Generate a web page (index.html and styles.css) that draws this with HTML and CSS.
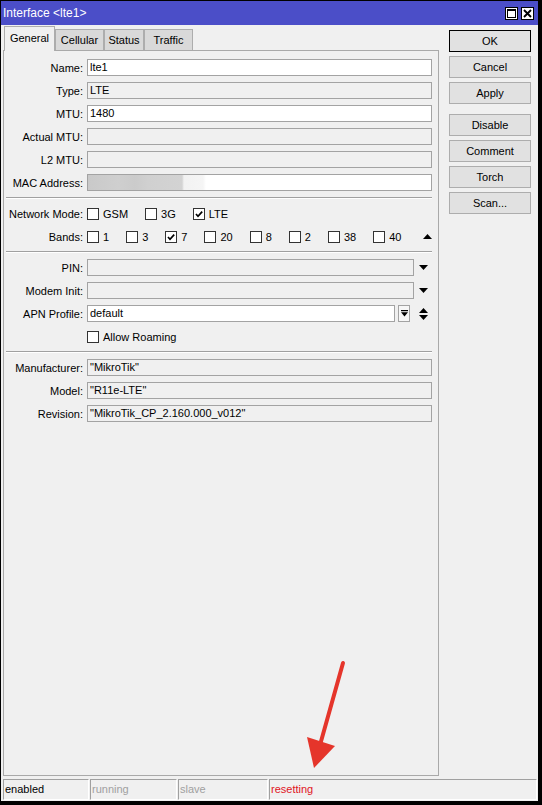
FILE: index.html
```html
<!DOCTYPE html>
<html>
<head>
<meta charset="utf-8">
<title>Interface &lt;lte1&gt;</title>
<link rel="stylesheet" href="styles.css">
</head>
<body>
<div class="window">
  <div class="titlebar">
    <span class="title">Interface &lt;lte1&gt;</span>
    <div class="tb-buttons">
      <span class="tb-btn"><svg width="9" height="9" viewBox="0 0 9 9"><rect x="0.5" y="0.5" width="8" height="8" fill="none" stroke="#000"/><rect x="0" y="0" width="9" height="2" fill="#000"/></svg></span>
      <span class="tb-btn"><svg width="9" height="9" viewBox="0 0 9 9"><path d="M1 1 L8 8 M8 1 L1 8" stroke="#000" stroke-width="1.9"/></svg></span>
    </div>
  </div>
  <div class="main">
    <div class="left">
      <div class="tabs">
        <div class="tab active t-general">General</div>
        <div class="tab t-cellular">Cellular</div>
        <div class="tab t-status">Status</div>
        <div class="tab t-traffic">Traffic</div>
      </div>
      <div class="panel">
        <div class="row"><span class="lbl">Name:</span><div class="field edit">lte1</div></div>
        <div class="row"><span class="lbl">Type:</span><div class="field">LTE</div></div>
        <div class="row"><span class="lbl">MTU:</span><div class="field edit">1480</div></div>
        <div class="row"><span class="lbl">Actual MTU:</span><div class="field"></div></div>
        <div class="row"><span class="lbl">L2 MTU:</span><div class="field"></div></div>
        <div class="row"><span class="lbl">MAC Address:</span><div class="field edit mac"></div></div>
        <div class="sep"></div>
        <div class="row"><span class="lbl">Network Mode:</span>
          <div class="checks">
            <label class="chk"><span class="cb"></span>GSM</label>
            <label class="chk"><span class="cb"></span>3G</label>
            <label class="chk"><span class="cb"><svg width="10" height="10" viewBox="0 0 10 10"><path d="M2 5 L4 7.2 L8.2 2.6" fill="none" stroke="#000" stroke-width="1.7"/></svg></span>LTE</label>
          </div>
        </div>
        <div class="row"><span class="lbl">Bands:</span>
          <div class="checks">
            <label class="chk"><span class="cb"></span>1</label>
            <label class="chk"><span class="cb"></span>3</label>
            <label class="chk"><span class="cb"><svg width="10" height="10" viewBox="0 0 10 10"><path d="M2 5 L4 7.2 L8.2 2.6" fill="none" stroke="#000" stroke-width="1.7"/></svg></span>7</label>
            <label class="chk"><span class="cb"></span>20</label>
            <label class="chk"><span class="cb"></span>8</label>
            <label class="chk"><span class="cb"></span>2</label>
            <label class="chk"><span class="cb"></span>38</label>
            <label class="chk"><span class="cb"></span>40</label>
            <span class="slot push"><svg width="9" height="5" viewBox="0 0 9 5"><polygon points="0,5 9,5 4.5,0" fill="#000"/></svg></span>
          </div>
        </div>
        <div class="sep"></div>
        <div class="row"><span class="lbl">PIN:</span>
          <div class="val"><div class="field grow"></div><span class="slot"><svg width="9" height="5" viewBox="0 0 9 5"><polygon points="0,0 9,0 4.5,5" fill="#000"/></svg></span></div>
        </div>
        <div class="row"><span class="lbl">Modem Init:</span>
          <div class="val"><div class="field grow"></div><span class="slot"><svg width="9" height="5" viewBox="0 0 9 5"><polygon points="0,0 9,0 4.5,5" fill="#000"/></svg></span></div>
        </div>
        <div class="row"><span class="lbl">APN Profile:</span>
          <div class="val"><div class="field edit grow">default</div><span class="dd"><svg width="7" height="7" viewBox="0 0 7 7"><rect x="0" y="0" width="7" height="1.2" fill="#000"/><polygon points="0,2.3 7,2.3 3.5,6.5" fill="#000"/></svg></span><span class="slot gap4"><svg width="9" height="12" viewBox="0 0 9 12"><polygon points="0,5 9,5 4.5,0" fill="#000"/><polygon points="0,7 9,7 4.5,12" fill="#000"/></svg></span></div>
        </div>
        <div class="row"><span class="lbl"></span>
          <div class="checks"><label class="chk"><span class="cb"></span>Allow Roaming</label></div>
        </div>
        <div class="sep"></div>
        <div class="row"><span class="lbl">Manufacturer:</span><div class="field">"MikroTik"</div></div>
        <div class="row"><span class="lbl">Model:</span><div class="field">"R11e-LTE"</div></div>
        <div class="row"><span class="lbl">Revision:</span><div class="field">"MikroTik_CP_2.160.000_v012"</div></div>
      </div>
    </div>
    <div class="buttons">
      <div class="btn default">OK</div>
      <div class="btn">Cancel</div>
      <div class="btn">Apply</div>
      <div class="btn group">Disable</div>
      <div class="btn">Comment</div>
      <div class="btn">Torch</div>
      <div class="btn">Scan...</div>
    </div>
  </div>
  <div class="statusbar">
    <div class="cell c1">enabled</div>
    <div class="cell c2 dim">running</div>
    <div class="cell c3 dim">slave</div>
    <div class="cell c4 red">resetting</div>
  </div>
</div>
<svg class="arrow" width="542" height="805" viewBox="0 0 542 805">
  <line x1="343" y1="663" x2="320" y2="745" stroke="#e5352b" stroke-width="4" stroke-linecap="round"/>
  <polygon points="314,768 307,737 335,746" fill="#e5352b"/>
</svg>
</body>
</html>
```
FILE: styles.css
```css
* { box-sizing: border-box; }
html, body { margin: 0; padding: 0; }
body {
  background: #000;
  font-family: "Liberation Sans", Arial, sans-serif;
  font-size: 11px;
  color: #000;
  width: 542px;
  height: 805px;
  overflow: hidden;
}
.window {
  margin: 1px 0 0 1px;
  width: 537px;
  background: #f0f0f0;
  display: flex;
  flex-direction: column;
  padding-bottom: 1px;
}
.titlebar {
  height: 24px;
  background: #4b4ec8;
  display: flex;
  align-items: center;
  justify-content: space-between;
  padding: 0 4px 0 2px;
}
.title { color: #fff; font-size: 12px; }
.tb-buttons { display: flex; gap: 3px; }
.tb-btn {
  width: 13px;
  height: 13px;
  border: 1px solid #000;
  background: #fff;
  display: flex;
  align-items: center;
  justify-content: center;
}
.main { display: flex; padding: 1px 0 0 2px; }
.left { width: 436px; display: flex; flex-direction: column; }
.tabs {
  height: 24px;
  display: flex;
  align-items: flex-end;
  padding-left: 1px;
  position: relative;
  z-index: 1;
}
.tab {
  height: 21px;
  background: #d9d9d9;
  border: 1px solid #adadad;
  border-bottom: none;
  text-align: center;
  line-height: 20px;
}
.tab.active {
  height: 25px;
  margin-bottom: -1px;
  background: #f0f0f0;
  line-height: 23px;
}
.t-general { width: 51px; }
.t-cellular { width: 49px; }
.t-status { width: 40px; }
.t-traffic { width: 49px; }
.panel {
  height: 726px;
  border: 1px solid #a9a9a9;
  background: #f0f0f0;
  padding: 8px 6px 0 0;
  display: flex;
  flex-direction: column;
  gap: 6px;
}
.row {
  display: grid;
  grid-template-columns: 79px 1fr;
  column-gap: 4px;
  align-items: center;
  height: 17px;
}
.lbl { text-align: right; white-space: nowrap; }
.field {
  height: 17px;
  border: 1px solid #a3a3a3;
  background: #f0f0f0;
  padding-left: 2px;
  line-height: 15px;
  white-space: nowrap;
  overflow: hidden;
}
.field.edit { background: #fff; }
.field.mac {
  background: linear-gradient(90deg, #c9c9c9 0, #cfcfcf 30px, #cbcbcb 47px, #d0d0d0 60px, #d3d3d3 94px, #f2f2f2 96px, #f5f5f5 115px, #fff 118px);
}
.sep {
  height: 2px;
  margin-left: 2px;
  border-top: 1px solid #a0a0a0;
  border-bottom: 1px solid #fff;
}
.checks { display: flex; align-items: center; height: 17px; }
.chk { display: flex; align-items: center; gap: 4px; margin-right: 17px; white-space: nowrap; }
.cb {
  width: 12px;
  height: 12px;
  border: 1px solid #333;
  background: #fff;
  display: flex;
  align-items: center;
  justify-content: center;
}
.slot { width: 18px; height: 17px; display: flex; align-items: center; justify-content: center; }
.slot.push { margin-left: auto; }
.slot.gap4 { margin-left: 4px; }
.val { display: flex; align-items: center; }
.grow { flex: 1; }
.dd {
  width: 12px;
  height: 17px;
  margin-left: 3px;
  border: 1px solid #a3a3a3;
  background: #f7f7f7;
  display: flex;
  align-items: center;
  justify-content: center;
}
.buttons {
  width: 82px;
  margin-left: 10px;
  margin-top: 4px;
  display: flex;
  flex-direction: column;
  gap: 4px;
}
.btn {
  height: 22px;
  border: 1px solid #adadad;
  background: #e1e1e1;
  display: flex;
  align-items: center;
  justify-content: center;
}
.btn.default { border-color: #000; }
.btn.group { margin-top: 6px; }
.statusbar {
  display: flex;
  gap: 1px;
  padding-left: 2px;
  margin-top: 3px;
  height: 21px;
}
.cell {
  border: 1px solid;
  border-color: #a0a0a0 #fff #fff #a0a0a0;
  line-height: 19px;
  padding-left: 1px;
  white-space: nowrap;
}
.c1 { width: 86px; }
.c2 { width: 87px; }
.c3 { width: 90px; }
.c4 { width: 268px; }
.dim { color: #a0a0a0; }
.red { color: #e0141e; }
.arrow { position: absolute; left: 0; top: 0; pointer-events: none; }
```
